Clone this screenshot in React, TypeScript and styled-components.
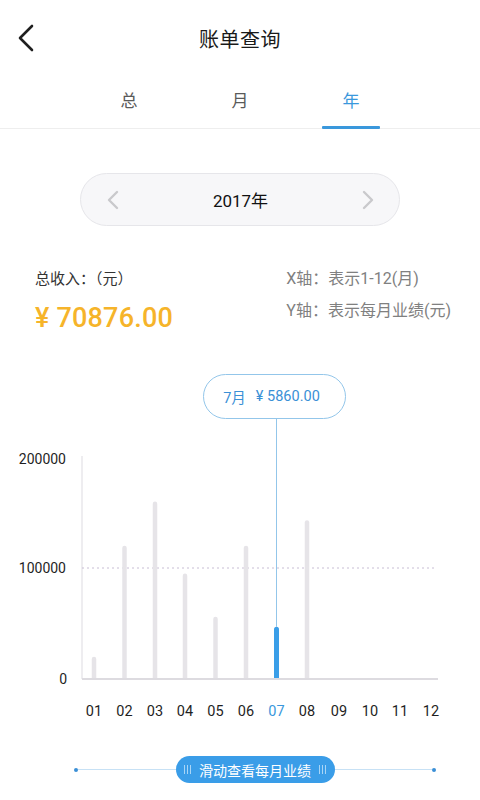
import React from "react";
import styled, { createGlobalStyle } from "styled-components";

const Global = createGlobalStyle`
  html, body { margin: 0; padding: 0; background: #fff; }
  body {
    font-family: Roboto, "Noto Sans CJK SC", "Noto Sans", sans-serif;
    color: #222;
    -webkit-font-smoothing: antialiased;
  }
  * { box-sizing: border-box; }
`;

const Page = styled.div`
  width: 480px;
  height: 800px;
  overflow: hidden;
  display: flex;
  flex-direction: column;
`;

const Header = styled.header`
  height: 80px;
  display: grid;
  grid-template-columns: 60px 1fr 60px;
  align-items: center;
  padding-bottom: 4px;
`;

const BackBtn = styled.div`
  padding-left: 16px;
  display: flex;
  align-items: center;
  height: 30px;
`;

const Title = styled.h1`
  margin: 0;
  text-align: center;
  font-size: 20px;
  font-weight: 400;
  color: #1a1a1a;
  letter-spacing: 0.5px;
`;

const Tabs = styled.nav`
  height: 49px;
  display: flex;
  justify-content: center;
  border-bottom: 1px solid #eeeeee;
`;

const Tab = styled.div<{ $active?: boolean }>`
  width: 111px;
  display: flex;
  justify-content: center;
  align-items: center;
  padding-bottom: 10px;
  position: relative;
  font-size: 17px;
  color: ${(p) => (p.$active ? "#3a98dc" : "#5a5a5a")};
  &::after {
    content: "";
    display: ${(p) => (p.$active ? "block" : "none")};
    position: absolute;
    left: 26px;
    right: 27px;
    bottom: -1px;
    height: 3px;
    background: #3a98dc;
    border-radius: 1px;
  }
`;

const YearPill = styled.div`
  margin: 44px auto 0;
  width: 320px;
  height: 53px;
  border-radius: 27px;
  background: #f7f7f9;
  border: 1px solid #e6e6ea;
  display: flex;
  align-items: center;
  justify-content: space-between;
  padding: 0 24px 0 25px;
`;

const YearText = styled.span`
  font-size: 17px;
  font-weight: 400;
  color: #111;
`;

const Info = styled.section`
  display: flex;
  justify-content: space-between;
  padding: 42px 29px 0 35px;
`;

const Col = styled.div`
  display: flex;
  flex-direction: column;
`;

const Label = styled.div`
  font-size: 15px;
  color: #333;
  line-height: 22px;
`;

const Amount = styled.div`
  margin-top: 10px;
  font-size: 27px;
  font-weight: 500;
  color: #f6b42a;
  line-height: 36px;
  letter-spacing: 0.2px;
`;

const AxisNote = styled.div`
  font-size: 16px;
  color: #808080;
  line-height: 22px;
  margin-bottom: 10px;
`;

const ChartWrap = styled.section`
  position: relative;
  margin-top: 24px;
  height: 370px;
`;

const Tooltip = styled.div`
  position: absolute;
  left: 203px;
  top: 14px;
  width: 143px;
  height: 45px;
  border: 1px solid #93c6ea;
  border-radius: 23px;
  background: #fff;
  display: flex;
  align-items: center;
  justify-content: center;
  gap: 10px;
  padding-right: 6px;
  font-size: 14.5px;
  color: #3a90d6;
`;

const Slider = styled.div`
  margin: 26px 0 0 74px;
  width: 362px;
  display: flex;
  align-items: center;
`;

const Dot = styled.span`
  width: 4px;
  height: 4px;
  border-radius: 50%;
  background: #3a8fd6;
  flex: none;
`;

const Track = styled.span`
  flex: 1;
  height: 1px;
  background: #c7e1f5;
`;

const Handle = styled.div`
  width: 159px;
  height: 27px;
  border-radius: 14px;
  background: #3a9de8;
  display: flex;
  align-items: center;
  justify-content: center;
  gap: 8px;
  font-size: 14px;
  color: #fff;
`;

const Grip = styled.span`
  display: flex;
  gap: 2px;
  & > i {
    display: block;
    width: 1px;
    height: 9px;
    background: #a9d5f6;
  }
`;

const bars = [20000, 120000, 160000, 95000, 56000, 120000, 47000, 143000];
const xs = [94, 124.5, 155, 185, 215.5, 246, 276.5, 307, 339, 370, 400, 431];
const base = 319;
const scale = 111 / 100000;

function GripMarks() {
  return (
    <Grip>
      <i />
      <i />
      <i />
    </Grip>
  );
}

export default function App() {
  return (
    <Page>
      <Global />
      <Header>
        <BackBtn>
          <svg width="20" height="28" viewBox="0 0 20 28">
            <path d="M16 2 L4 14 L16 26" fill="none" stroke="#1f1f1f" strokeWidth="2.6" strokeLinecap="round" strokeLinejoin="round" />
          </svg>
        </BackBtn>
        <Title>账单查询</Title>
        <div />
      </Header>
      <Tabs>
        <Tab>总</Tab>
        <Tab>月</Tab>
        <Tab $active>年</Tab>
      </Tabs>
      <YearPill>
        <svg width="14" height="20" viewBox="0 0 14 20">
          <path d="M11 2 L3 10 L11 18" fill="none" stroke="#c9c9cc" strokeWidth="2.4" strokeLinecap="round" strokeLinejoin="round" />
        </svg>
        <YearText>2017年</YearText>
        <svg width="14" height="20" viewBox="0 0 14 20">
          <path d="M3 2 L11 10 L3 18" fill="none" stroke="#c9c9cc" strokeWidth="2.4" strokeLinecap="round" strokeLinejoin="round" />
        </svg>
      </YearPill>
      <Info>
        <Col>
          <Label>总收入：（元）</Label>
          <Amount>¥ 70876.00</Amount>
        </Col>
        <Col>
          <AxisNote>X轴：表示1-12(月)</AxisNote>
          <AxisNote>Y轴：表示每月业绩(元)</AxisNote>
        </Col>
      </Info>
      <ChartWrap>
        <svg width="480" height="370" viewBox="0 0 480 370">
          <line x1="82" y1="96" x2="82" y2={base} stroke="#e9e7eb" strokeWidth="1.5" />
          <line x1="82" y1="208" x2="437" y2="208" stroke="#c8bdd4" strokeWidth="1" strokeDasharray="2 3" />
          <g fontFamily="Roboto, sans-serif" fontSize="14" fill="#1f1f1f" textAnchor="end">
            <text x="66" y="104">200000</text>
            <text x="66" y="213">100000</text>
            <text x="67" y="324">0</text>
          </g>
          {bars.map((v, i) => {
            const h = v * scale;
            const active = i === 6;
            const w = active ? 5 : 4.5;
            return (
              <rect
                key={i}
                x={xs[i] - w / 2}
                y={base - h}
                width={w}
                height={h + 1}
                rx={w / 2}
                fill={active ? "#3a9ee8" : "#e6e4e8"}
              />
            );
          })}
          <line x1="82" y1={base} x2="438" y2={base} stroke="#dddbe0" strokeWidth="2" />
          <line x1="276.5" y1="58" x2="276.5" y2={base - 47000 * scale} stroke="#93c6ea" strokeWidth="1" />
          <g fontFamily="Roboto, sans-serif" fontSize="14.5" textAnchor="middle">
            {xs.map((x, i) => (
              <text key={i} x={x} y="356" fill={i === 6 ? "#3a98dc" : "#1f1f1f"}>
                {String(i + 1).padStart(2, "0")}
              </text>
            ))}
          </g>
        </svg>
        <Tooltip>
          <span>7月</span>
          <span>¥ 5860.00</span>
        </Tooltip>
      </ChartWrap>
      <Slider>
        <Dot />
        <Track />
        <Handle>
          <GripMarks />
          <span>滑动查看每月业绩</span>
          <GripMarks />
        </Handle>
        <Track />
        <Dot />
      </Slider>
    </Page>
  );
}
